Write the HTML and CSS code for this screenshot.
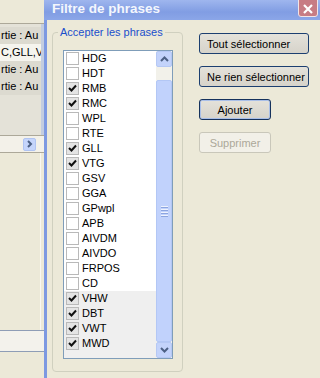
FILE: index.html
```html
<!DOCTYPE html>
<html lang="fr">
<head>
<meta charset="utf-8">
<title>Filtre de phrases</title>
<link rel="stylesheet" href="styles.css">
</head>
<body>
<div class="screen">
  <div class="bgwin">
    <div class="bg-top"></div>
    <div class="bg-list">
      <div class="bg-row">rtie : Au</div>
      <div class="bg-row sel">C,GLL,V</div>
      <div class="bg-row">rtie : Au</div>
      <div class="bg-row">rtie : Au</div>
    </div>
    <div class="bg-hscroll">
      <span class="bg-arrow"><svg width="7" height="8" viewBox="0 0 7 8"><path d="M2 1 L5 4 L2 7" fill="none" stroke="#4d6185" stroke-width="2"/></svg></span>
    </div>
    <div class="bg-fill"></div>
    <div class="bg-bar"></div>
    <div class="bg-bottom"></div>
  </div>
  <div class="dialog">
    <div class="titlebar">
      <span class="title">Filtre de phrases</span>
      <span class="close"><svg width="10" height="10" viewBox="0 0 10 10"><path d="M1 1 L9 9 M9 1 L1 9" stroke="#fff" stroke-width="2.2"/></svg></span>
    </div>
    <div class="dbody">
      <fieldset class="group">
        <legend>Accepter les phrases</legend>
        <div class="list">
          <div class="items">
            <div class="item"><span class="cb"></span>HDG</div>
            <div class="item"><span class="cb"></span>HDT</div>
            <div class="item"><span class="cb on"><svg width="9" height="9" viewBox="0 0 9 9"><path d="M1 4 L3.5 6.5 L8 1.5" fill="none" stroke="#111" stroke-width="2"/></svg></span>RMB</div>
            <div class="item"><span class="cb on"><svg width="9" height="9" viewBox="0 0 9 9"><path d="M1 4 L3.5 6.5 L8 1.5" fill="none" stroke="#111" stroke-width="2"/></svg></span>RMC</div>
            <div class="item"><span class="cb"></span>WPL</div>
            <div class="item"><span class="cb"></span>RTE</div>
            <div class="item"><span class="cb on"><svg width="9" height="9" viewBox="0 0 9 9"><path d="M1 4 L3.5 6.5 L8 1.5" fill="none" stroke="#111" stroke-width="2"/></svg></span>GLL</div>
            <div class="item"><span class="cb on"><svg width="9" height="9" viewBox="0 0 9 9"><path d="M1 4 L3.5 6.5 L8 1.5" fill="none" stroke="#111" stroke-width="2"/></svg></span>VTG</div>
            <div class="item"><span class="cb"></span>GSV</div>
            <div class="item"><span class="cb"></span>GGA</div>
            <div class="item"><span class="cb"></span>GPwpl</div>
            <div class="item"><span class="cb"></span>APB</div>
            <div class="item"><span class="cb"></span>AIVDM</div>
            <div class="item"><span class="cb"></span>AIVDO</div>
            <div class="item"><span class="cb"></span>FRPOS</div>
            <div class="item"><span class="cb"></span>CD</div>
            <div class="item grey"><span class="cb on"><svg width="9" height="9" viewBox="0 0 9 9"><path d="M1 4 L3.5 6.5 L8 1.5" fill="none" stroke="#111" stroke-width="2"/></svg></span>VHW</div>
            <div class="item grey"><span class="cb on"><svg width="9" height="9" viewBox="0 0 9 9"><path d="M1 4 L3.5 6.5 L8 1.5" fill="none" stroke="#111" stroke-width="2"/></svg></span>DBT</div>
            <div class="item grey"><span class="cb on"><svg width="9" height="9" viewBox="0 0 9 9"><path d="M1 4 L3.5 6.5 L8 1.5" fill="none" stroke="#111" stroke-width="2"/></svg></span>VWT</div>
            <div class="item grey"><span class="cb on"><svg width="9" height="9" viewBox="0 0 9 9"><path d="M1 4 L3.5 6.5 L8 1.5" fill="none" stroke="#111" stroke-width="2"/></svg></span>MWD</div>
            <div class="filler"></div>
          </div>
          <div class="vscroll">
            <div class="sbtn"><svg width="9" height="6" viewBox="0 0 9 6"><path d="M1 5 L4.5 1.5 L8 5" fill="none" stroke="#4d6185" stroke-width="2"/></svg></div>
            <div class="track"></div>
            <div class="thumb"><span class="grip"></span><span class="grip"></span><span class="grip"></span><span class="grip"></span></div>
            <div class="sbtn"><svg width="9" height="6" viewBox="0 0 9 6"><path d="M1 1 L4.5 4.5 L8 1" fill="none" stroke="#4d6185" stroke-width="2"/></svg></div>
          </div>
        </div>
      </fieldset>
      <div class="buttons">
        <button class="btn wide">Tout sélectionner</button>
        <button class="btn wide">Ne rien sélectionner</button>
        <button class="btn small def">Ajouter</button>
        <button class="btn small" disabled>Supprimer</button>
      </div>
    </div>
  </div>
</div>
</body>
</html>
```

FILE: styles.css
```css
* { box-sizing: border-box; margin: 0; padding: 0; }
html, body { width: 320px; height: 378px; overflow: hidden; }
body {
  background: #ece9d8;
  font: 11px "Liberation Sans", Arial, sans-serif;
  color: #000;
}
.screen { display: flex; width: 320px; height: 378px; }

/* background window */
.bgwin {
  width: 44px; flex: none;
  display: flex; flex-direction: column;
  background: #ece9d8;
  overflow: hidden;
}
.bg-top { height: 24px; flex: none; border-bottom: 1px solid #aca899; }
.bg-list {
  height: 111px; flex: none;
  padding-top: 3px;
  background: #e4e2d8;
  border-right: 3px solid #c3cde0;
}
.bg-row {
  height: 17px; line-height: 17px;
  padding-left: 1px;
  white-space: nowrap; overflow: hidden;
  background: #dcdad0;
}
.bg-row.sel { background: #f5f4ee; }
.bg-hscroll {
  height: 18px; flex: none;
  display: flex; align-items: center;
  padding-left: 23px;
  border-top: 1px solid #aca899;
  border-bottom: 1px solid #aca899;
  background: #f3f1e9;
}
.bg-arrow {
  width: 13px; height: 13px;
  display: flex; align-items: center; justify-content: center;
  background: #c5d5fb;
  border: 1px solid #b0c4f2;
  border-radius: 2px;
}
.bg-fill { flex: none; height: 177px; border-right: 1px solid #f8f7f2; margin-right: 3px; }
.bg-bar {
  height: 22px; flex: none;
  border-top: 1px solid #8e9db6;
  border-bottom: 1px solid #8e9db6;
  background: #f3f2ec;
}
.bg-bottom { flex: 1; }

/* dialog */
.dialog { flex: 1; display: flex; flex-direction: column; }
.titlebar {
  height: 20px; flex: none;
  display: flex; align-items: flex-start;
  padding-left: 8px;
  background: linear-gradient(#9fb6ee, #819de3 60%, #8ba6e8);
}
.title {
  color: #f4f7fd;
  font: bold 13.5px "Liberation Sans", Arial, sans-serif;
  line-height: 18px;
}
.close {
  margin-left: auto; margin-right: 2px; margin-top: -3px;
  width: 20px; height: 20px;
  display: flex; align-items: center; justify-content: center;
  padding-top: 3px;
  background: #c77c84;
  border: 1px solid #f2e4e6;
  border-radius: 3px;
}
.dbody {
  flex: 1;
  display: flex; align-items: flex-start;
  border-left: 3px solid #7d99e1;
  padding: 6px 0 0 5px;
  gap: 16px;
}
.group {
  width: 131px; height: 346px;
  border: 1px solid #d0d0bf;
  border-radius: 4px;
  padding: 0 9px 12px 10px;
}
.group legend {
  margin-left: -5px;
  padding: 0 2px;
  line-height: 13px;
  color: #1a4fcc;
}
.list {
  margin-top: 11px;
  height: 309px;
  display: flex;
  border: 1px solid #7f9db9;
  background: #fff;
}
.items { flex: 1; display: flex; flex-direction: column; }
.item {
  height: 15px; flex: none;
  display: flex; align-items: flex-start;
  padding-left: 2px;
  line-height: 15px;
  gap: 3px;
}
.item.grey { background: #efefef; }
.cb {
  width: 13px; height: 13px; margin-top: 1px;
  border: 1px solid #b9b9b9;
  background: #fff;
  display: flex; align-items: center; justify-content: center;
}
.cb.on { background: #e4e4e4; }
.filler { flex: 1; background: #efefef; }
.vscroll {
  width: 16px; flex: none;
  display: flex; flex-direction: column;
  background: #f5f4ee;
}
.sbtn {
  height: 16px; flex: none;
  display: flex; align-items: center; justify-content: center;
  background: #c3d3fb;
  border: 1px solid #b5c8f4;
  border-radius: 2px;
}
.track { height: 13px; flex: none; background: #f2f1ea; }
.thumb {
  flex: 1;
  display: flex; flex-direction: column; align-items: center; justify-content: center;
  gap: 1px;
  background: #c1d2fc;
  border: 1px solid #b3c7f5;
  border-radius: 2px;
}
.grip { width: 7px; height: 1px; background: #eef2fd; box-shadow: 0 1px 0 #8ca5e0; margin-bottom: 1px; }

.buttons {
  display: flex; flex-direction: column; gap: 12px;
  padding-top: 7px;
}
.btn {
  height: 21px;
  font: 11px "Liberation Sans", Arial, sans-serif;
  color: #000;
  background: linear-gradient(#e4e2da, #d6d3ca);
  border: 1px solid #1c3f70;
  border-radius: 3px;
}
.btn.wide { width: 110px; text-align: left; padding-left: 7px; }
.btn.small { width: 72px; text-align: center; }
.btn.def { border-color: #16325c; box-shadow: inset 0 0 0 1px #a9bfe8; }
.btn:disabled {
  color: #aca899;
  background: #f2f0e8;
  border-color: #c9c7ba;
}
```
